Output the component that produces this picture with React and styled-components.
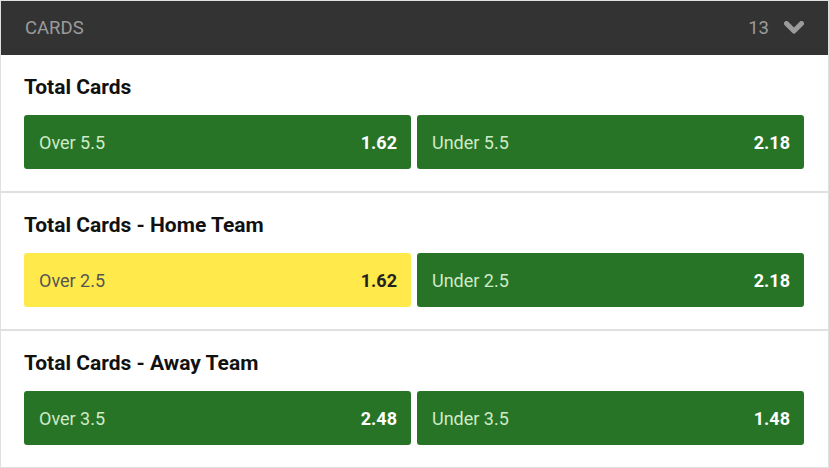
import React from "react";
import styled, { createGlobalStyle } from "styled-components";

const GlobalStyle = createGlobalStyle`
  html, body { margin: 0; padding: 0; background: #ffffff; }
  body { font-family: Roboto, "Liberation Sans", Arial, sans-serif; }
  * { box-sizing: border-box; }
`;

const Panel = styled.div`
  width: 829px;
  border: 1px solid #e0e0e0;
  background: #ffffff;
`;

const Header = styled.div`
  height: 54px;
  background: #333333;
  display: flex;
  align-items: center;
  justify-content: space-between;
  padding: 0 24px 1px 24px;
  color: #9b9b9b;
  font-size: 18.5px;
`;

const HeaderTitle = styled.span`
  text-transform: uppercase;
`;

const HeaderRight = styled.div`
  display: flex;
  align-items: center;
  gap: 15px;
`;

const Section = styled.div`
  padding: 20px 24px 22px 23px;
  border-top: ${(p) => (p.$first ? "none" : "2px solid #e0e0e0")};
`;

const Title = styled.div`
  font-size: 21px;
  line-height: 24px;
  font-weight: 700;
  color: #111111;
  margin-bottom: 16px;
`;

const Row = styled.div`
  display: grid;
  grid-template-columns: 1fr 1fr;
  gap: 6px;
`;

const Button = styled.div`
  height: 54px;
  border-radius: 3px;
  display: flex;
  align-items: center;
  justify-content: space-between;
  padding: 0 14px 0 15px;
  font-size: 18px;
  background: ${(p) => (p.$selected ? "#ffe94b" : "#277426")};
`;

const Label = styled.span`
  color: ${(p) => (p.$selected ? "#555555" : "#cfeac8")};
`;

const Odds = styled.span`
  font-weight: 700;
  color: ${(p) => (p.$selected ? "#222222" : "#ffffff")};
`;

const Chevron = () => (
  <svg width="20" height="14" viewBox="0 0 20 14">
    <polyline
      points="2.5,2.5 10,10 17.5,2.5"
      fill="none"
      stroke="#9b9b9b"
      strokeWidth="5"
      strokeLinecap="round"
      strokeLinejoin="round"
    />
  </svg>
);

const markets = [
  {
    title: "Total Cards",
    options: [
      { label: "Over 5.5", odds: "1.62" },
      { label: "Under 5.5", odds: "2.18" },
    ],
  },
  {
    title: "Total Cards - Home Team",
    options: [
      { label: "Over 2.5", odds: "1.62", selected: true },
      { label: "Under 2.5", odds: "2.18" },
    ],
  },
  {
    title: "Total Cards - Away Team",
    options: [
      { label: "Over 3.5", odds: "2.48" },
      { label: "Under 3.5", odds: "1.48" },
    ],
  },
];

export default function App() {
  return (
    <>
      <GlobalStyle />
      <Panel>
        <Header>
          <HeaderTitle>Cards</HeaderTitle>
          <HeaderRight>
            <span>13</span>
            <Chevron />
          </HeaderRight>
        </Header>
        {markets.map((m, i) => (
          <Section key={m.title} $first={i === 0}>
            <Title>{m.title}</Title>
            <Row>
              {m.options.map((o) => (
                <Button key={o.label} $selected={o.selected}>
                  <Label $selected={o.selected}>{o.label}</Label>
                  <Odds $selected={o.selected}>{o.odds}</Odds>
                </Button>
              ))}
            </Row>
          </Section>
        ))}
      </Panel>
    </>
  );
}
